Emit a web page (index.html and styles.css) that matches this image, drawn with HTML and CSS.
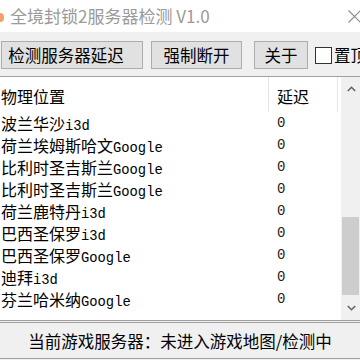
FILE: index.html
```html
<!DOCTYPE html>
<html lang="zh-CN">
<head>
  <meta charset="UTF-8">
  <meta name="viewport" content="width=device-width, initial-scale=1.0">
  <title>全境封锁2服务器检测 V1.0</title>
  <link rel="stylesheet" href="styles.css">
</head>
<body>
  <div class="window">
    <!-- Title Bar -->
    <div class="titlebar">
      <span class="app-icon"></span>
      <span class="title">全境封锁2服务器检测 V1.0</span>
      <svg class="close" width="13" height="13" viewBox="0 0 13 13">
        <path d="M0.5 0.5 L12.5 12.5 M12.5 0.5 L0.5 12.5" stroke="#8c8c8c" stroke-width="1.1" fill="none"/>
      </svg>
    </div>

    <!-- Buttons -->
    <div class="toolbar">
      <button class="btn btn-check">检测服务器延迟</button>
      <button class="btn btn-stop">强制断开</button>
      <button class="btn btn-about">关于</button>
      <label class="topmost"><span class="box"></span>置顶</label>
    </div>

    <!-- Server List -->
    <div class="listview">
      <div class="list-main">
        <div class="list-head">
          <div class="col-name">物理位置</div>
          <div class="col-ping">延迟</div>
        </div>
        <div class="row"><div class="col-name">波兰华沙<span class="tag">i3d</span></div><div class="col-ping">0</div></div>
        <div class="row"><div class="col-name">荷兰埃姆斯哈文<span class="tag">Google</span></div><div class="col-ping">0</div></div>
        <div class="row"><div class="col-name">比利时圣吉斯兰<span class="tag">Google</span></div><div class="col-ping">0</div></div>
        <div class="row"><div class="col-name">比利时圣吉斯兰<span class="tag">Google</span></div><div class="col-ping">0</div></div>
        <div class="row"><div class="col-name">荷兰鹿特丹<span class="tag">i3d</span></div><div class="col-ping">0</div></div>
        <div class="row"><div class="col-name">巴西圣保罗<span class="tag">i3d</span></div><div class="col-ping">0</div></div>
        <div class="row"><div class="col-name">巴西圣保罗<span class="tag">Google</span></div><div class="col-ping">0</div></div>
        <div class="row"><div class="col-name">迪拜<span class="tag">i3d</span></div><div class="col-ping">0</div></div>
        <div class="row"><div class="col-name">芬兰哈米纳<span class="tag">Google</span></div><div class="col-ping">0</div></div>
      </div>
      <div class="scrollbar">
        <div class="arrow">
          <svg width="9" height="6" viewBox="0 0 9 6"><path d="M0.8 5 L4.5 1.3 L8.2 5" stroke="#606060" stroke-width="1.5" fill="none"/></svg>
        </div>
        <div class="track"><div class="thumb"></div></div>
        <div class="arrow">
          <svg width="9" height="6" viewBox="0 0 9 6"><path d="M0.8 1 L4.5 4.7 L8.2 1" stroke="#606060" stroke-width="1.5" fill="none"/></svg>
        </div>
      </div>
    </div>

    <!-- Status -->
    <div class="statusbar">当前游戏服务器：未进入游戏地图/检测中</div>
  </div>
</body>
</html>
```

FILE: styles.css
```css
/* General Styles */
body {
  margin: 0;
  padding: 0;
  background-color: #f0f0f0;
  font-family: "Noto Sans CJK SC", "Liberation Sans", sans-serif;
  color: #000;
}

.window {
  width: 360px;
  height: 360px;
  overflow: hidden;
  display: flex;
  flex-direction: column;
}

/* Title Bar */
.titlebar {
  height: 32px;
  background-color: #fff;
  display: flex;
  align-items: center;
  flex-shrink: 0;
}

.app-icon {
  width: 4px;
  height: 9px;
  margin-top: 2px;
  background-color: #f5a066;
  border-radius: 0 5px 5px 0;
}

.title {
  margin-left: 6px;
  font-size: 17px;
  line-height: 20px;
  color: #9a9a9a;
}

.close {
  margin-left: auto;
  margin-right: -1px;
  margin-top: 0;
}

/* Toolbar */
.toolbar {
  height: 44px;
  display: flex;
  align-items: flex-start;
  padding: 9px 0 0 1px;
  box-sizing: border-box;
  flex-shrink: 0;
  white-space: nowrap;
  overflow: hidden;
}

.btn {
  flex-shrink: 0;
  height: 28px;
  padding: 0;
  border: 1px solid #adadad;
  background-color: #e1e1e1;
  font-family: "Noto Sans CJK SC", sans-serif;
  font-size: 16.5px;
  line-height: 24px;
  color: #000;
}

.btn-check {
  width: 142px;
  margin-right: 8px;
  padding-right: 12px;
}

.btn-stop {
  width: 91px;
  margin-right: 12px;
}

.btn-about {
  width: 54px;
  margin-right: 7px;
}

.topmost {
  flex-shrink: 0;
  display: flex;
  align-items: center;
  height: 28px;
  font-size: 16.5px;
}

.topmost .box {
  width: 15px;
  height: 15px;
  border: 1px solid #333;
  background-color: #fff;
  margin-right: 2px;
}

/* List View */
.listview {
  height: 245px;
  display: flex;
  background-color: #fff;
  border-top: 1px solid #a0a0a0;
  border-bottom: 1px solid #a0a0a0;
  box-sizing: border-box;
  flex-shrink: 0;
}

.list-main {
  flex: 1;
}

.list-head {
  height: 35px;
  display: flex;
  font-size: 16px;
  line-height: 38px;
}

.list-head .col-name {
  border-right: 1px solid #e5e5e5;
}

.list-head .col-ping {
  border-right: 1px solid #e5e5e5;
}

.col-name {
  width: 267px;
  padding-left: 1px;
  white-space: nowrap;
}

.col-ping {
  width: 60px;
  padding-left: 8px;
}

.row {
  height: 22px;
  display: flex;
  font-size: 16px;
  line-height: 22px;
}

.row .col-ping {
  padding-left: 9px;
  font-family: "Liberation Mono", monospace;
  font-size: 14px;
  color: #222;
}

.tag {
  font-family: "Liberation Mono", monospace;
  font-size: 13.8px;
}

.scrollbar {
  width: 19px;
  background-color: #f0f0f0;
  display: flex;
  flex-direction: column;
}

.arrow {
  height: 24px;
  display: flex;
  align-items: center;
  justify-content: center;
  padding-left: 1px;
}

.track {
  flex: 1;
  display: flex;
  flex-direction: column;
  justify-content: flex-end;
  padding-bottom: 1px;
}

.thumb {
  height: 78px;
  margin: 0 1px;
  background-color: #cdcdcd;
}

/* Status Bar */
.statusbar {
  margin-top: 1px;
  height: 37px;
  border-top: 1px solid #a0a0a0;
  border-bottom: 1px solid #a0a0a0;
  box-sizing: border-box;
  text-align: center;
  font-size: 16.5px;
  line-height: 36px;
  white-space: nowrap;
}
```
